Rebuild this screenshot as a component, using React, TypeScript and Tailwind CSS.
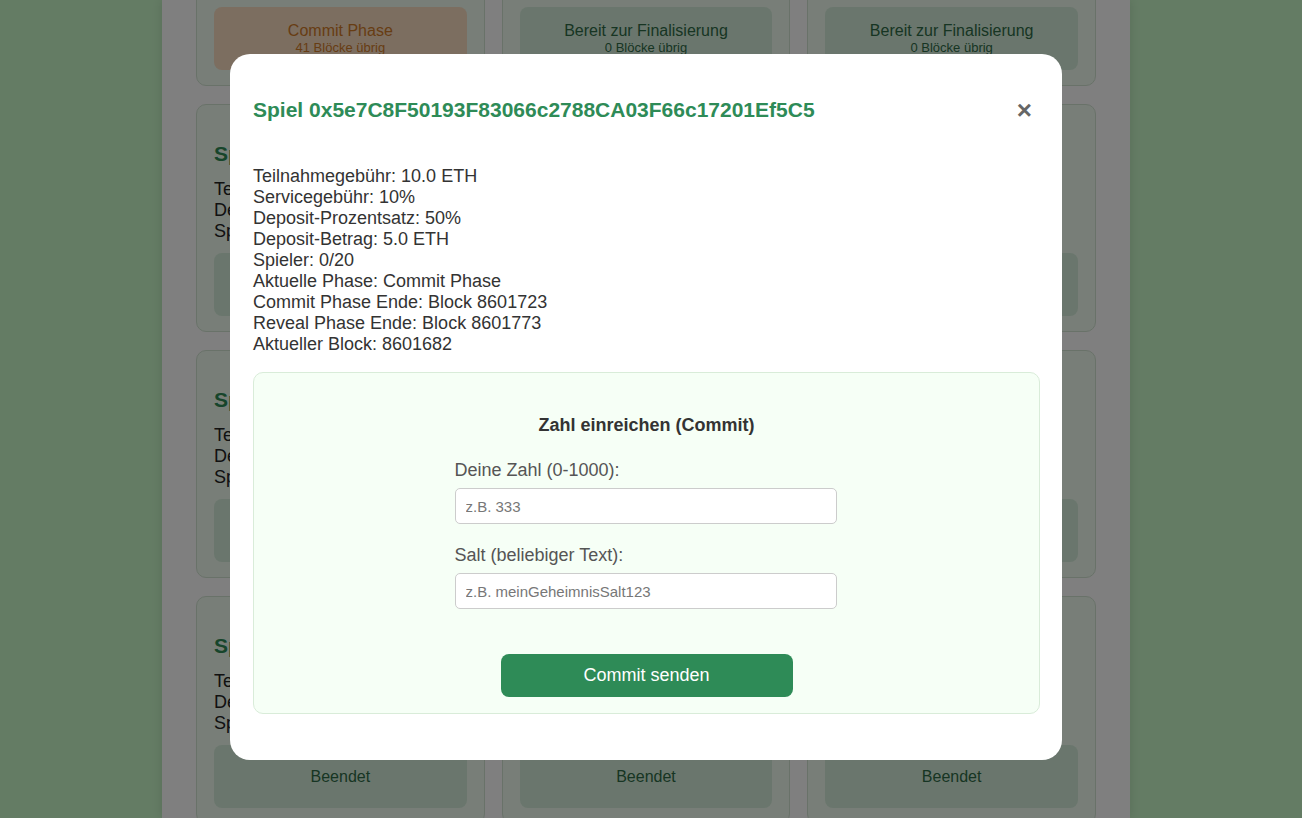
import React from "react";

type Status = { main: string; sub?: string; tone: "orange" | "green" | "gray" };

const rows: Status[][] = [
  [
    { main: "Commit Phase", sub: "41 Blöcke übrig", tone: "orange" },
    { main: "Bereit zur Finalisierung", sub: "0 Blöcke übrig", tone: "green" },
    { main: "Bereit zur Finalisierung", sub: "0 Blöcke übrig", tone: "green" },
  ],
  [
    { main: "Beendet", tone: "gray" },
    { main: "Beendet", tone: "gray" },
    { main: "Beendet", tone: "gray" },
  ],
  [
    { main: "Beendet", tone: "gray" },
    { main: "Beendet", tone: "gray" },
    { main: "Beendet", tone: "gray" },
  ],
  [
    { main: "Beendet", tone: "gray" },
    { main: "Beendet", tone: "gray" },
    { main: "Beendet", tone: "gray" },
  ],
];

function GameCard({ s }: { s: Status }) {
  const box =
    s.tone === "orange"
      ? "bg-[#f9dcc0] text-[#cf7a28]"
      : "bg-[#d4edda] text-[#2f6b47]";
  return (
    <div className="h-[228px] rounded-[10px] border border-[#d3e4d3] bg-[#f0fdf0] px-[17px] pt-[17px] overflow-hidden">
      <h3 className="mt-[20px] text-[21px] leading-[24px] font-bold text-[#2e8b57] truncate">
        Spiel 0x3b9C…a71D2
      </h3>
      <div className="mt-[13px] text-[18px] leading-[21px] text-[#222]">
        <div className="truncate">Teilnahmegebühr: 1.0 ETH</div>
        <div className="truncate">Deposit: 50%</div>
        <div className="truncate">Spieler: 0/20</div>
      </div>
      <div className={`mt-[11px] h-[63px] rounded-[8px] flex flex-col items-center justify-center ${box}`}>
        <div className="text-[16px] leading-[18px]">{s.main}</div>
        {s.sub && <div className="text-[13px] leading-[15px]">{s.sub}</div>}
      </div>
    </div>
  );
}

export default function App() {
  return (
    <div className="relative h-[818px] w-full overflow-hidden bg-[#c9f8c9] pr-[10px] font-['Liberation_Sans',Arial,sans-serif]">
      <div className="mx-auto flex h-full w-[968px] flex-col bg-white px-[34px] shadow-[0_0_10px_rgba(0,0,0,0.12)]">
        <div className="-mt-[142px] grid grid-cols-3 gap-x-[17px] gap-y-[18px]">
          {rows.map((r, i) => r.map((s, j) => <GameCard key={`${i}-${j}`} s={s} />))}
        </div>
      </div>

      <div className="fixed inset-0 bg-black/50 flex items-center justify-center pr-[10px]">
        <div className="w-[832px] h-[706px] -mt-[4px] rounded-[20px] bg-white pl-[23px] pr-[22px]">
          <div className="mt-[44px] flex items-center justify-between">
            <h2 className="text-[21px] leading-[24px] font-bold text-[#2e8b57]">
              Spiel 0x5e7C8F50193F83066c2788CA03F66c17201Ef5C5
            </h2>
            <button className="mr-[8px] text-[#666] text-[26px] leading-[24px] font-bold">×</button>
          </div>

          <div className="mt-[44px] text-[18px] leading-[21px] text-[#333]">
            <div>Teilnahmegebühr: 10.0 ETH</div>
            <div>Servicegebühr: 10%</div>
            <div>Deposit-Prozentsatz: 50%</div>
            <div>Deposit-Betrag: 5.0 ETH</div>
            <div>Spieler: 0/20</div>
            <div>Aktuelle Phase: Commit Phase</div>
            <div>Commit Phase Ende: Block 8601723</div>
            <div>Reveal Phase Ende: Block 8601773</div>
            <div>Aktueller Block: 8601682</div>
          </div>

          <div className="mt-[17px] h-[342px] rounded-[10px] border border-[#d9ecd9] bg-[#f6fff6] flex flex-col items-center">
            <h4 className="mt-[42px] text-[18px] leading-[21px] font-bold text-[#333]">
              Zahl einreichen (Commit)
            </h4>
            <div className="mt-[24px] w-[382px] -translate-x-px">
              <label className="block text-[18px] leading-[21px] text-[#555]">Deine Zahl (0-1000):</label>
              <input
                className="mt-[7px] block h-[36px] w-full rounded-[5px] border border-[#ccc] bg-white px-[10px] text-[15px] text-[#333] placeholder:text-[#777] outline-none"
                placeholder="z.B. 333"
              />
              <label className="mt-[21px] block text-[18px] leading-[21px] text-[#555]">Salt (beliebiger Text):</label>
              <input
                className="mt-[7px] block h-[36px] w-full rounded-[5px] border border-[#ccc] bg-white px-[10px] text-[15px] text-[#333] placeholder:text-[#777] outline-none"
                placeholder="z.B. meinGeheimnisSalt123"
              />
            </div>
            <button className="mt-[45px] h-[43px] w-[292px] rounded-[8px] bg-[#2e8b57] text-[18px] text-white">
              Commit senden
            </button>
          </div>
        </div>
      </div>
    </div>
  );
}
